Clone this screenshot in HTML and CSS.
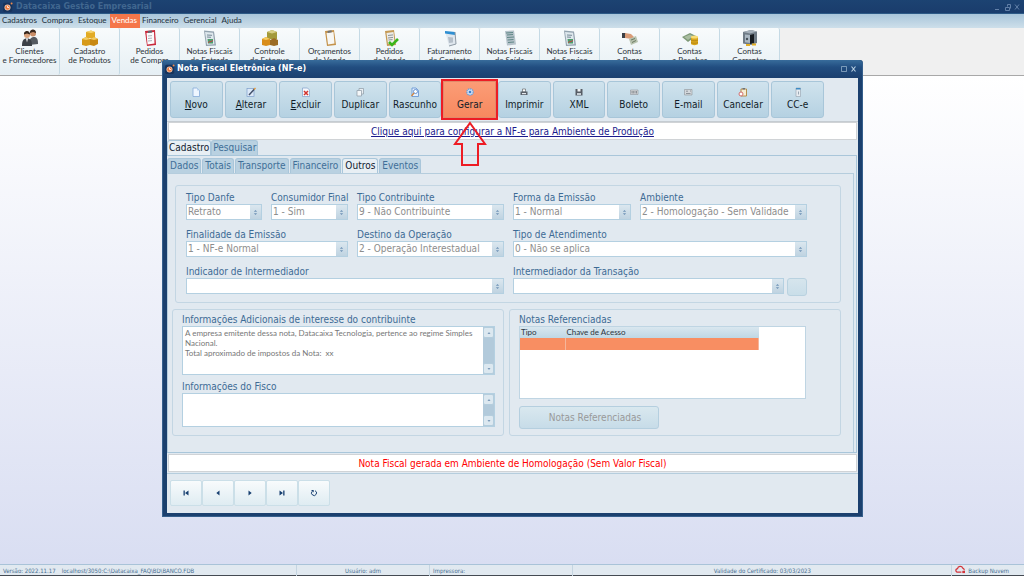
FILE: index.html
```html
<!DOCTYPE html>
<html lang="pt-BR">
<head>
<meta charset="utf-8">
<title>Datacaixa Gestão Empresarial</title>
<link rel="stylesheet" href="styles.css">
</head>
<body>
<svg class="defs" aria-hidden="true">
  <symbol id="logo" viewBox="0 0 12 12"><rect x="0" y="1" width="11" height="11" rx="2" fill="#16335c"/><circle cx="5.4" cy="6.6" r="3.6" fill="#f4c9ae"/><circle cx="5.4" cy="6.6" r="2.7" fill="#e9783f"/><path d="M5.4 4.6v2h2" stroke="#fff" fill="none"/><circle cx="10.3" cy="1.7" r="1.2" fill="#f08a4b"/></symbol>
  <symbol id="people" viewBox="0 0 18 18"><circle cx="12" cy="4.5" r="3" fill="#c98e68"/><path d="M9 4a3 3 0 0 1 6-1v1l-3-1z" fill="#3a2a20"/><path d="M8 16c0-6 2-8 5-8s4 2 4 7z" fill="#555b62"/><circle cx="6" cy="6" r="3" fill="#d9a27c"/><path d="M3 5.500a3 3 0 0 1 6-1v1l-3-1z" fill="#33251c"/><path d="M1 17c0-5 1-7.500 5-7.500s5 2.500 5 7.500z" fill="#3c4147"/><path d="M5 9.500l1 4 1-4z" fill="#fff"/></symbol>
  <symbol id="boxes" viewBox="0 0 18 18"><path d="M5 3l5-1.500 4 1.500v6H5z" fill="#e2ab25"/><path d="M5 3l5-1.500 4 1.500-4 1z" fill="#f6d573"/><path d="M1 10l4-2 4 2v6l-4 1-4-1z" fill="#d79a1a"/><path d="M9 10l4-2 4 2v5l-4 2-4-1z" fill="#c88812"/><path d="M1 10l4-2 4 2-4 1zM9 10l4-2 4 2-4 1z" fill="#f4cd62"/></symbol>
  <symbol id="boxes2" viewBox="0 0 18 18"><path d="M6 3l5-2 5 2v7H6z" fill="#a39a3b"/><path d="M6 3l5-2 5 2-5 1.500z" fill="#d8cf86"/><path d="M1 10l4-2 4 2v6l-4 1-4-1z" fill="#d98d1a"/><path d="M9 11l4-2 4 2v5l-4 1-4-1z" fill="#9b6b24"/><path d="M1 10l4-2 4 2-4 1z" fill="#f4cd62"/></symbol>
  <symbol id="clipred" viewBox="0 0 18 18"><path d="M4 2l10-1 1 15-9 1z" fill="#c9283b"/><path d="M5.500 4l7.500-1 .5 11.500-7 1z" fill="#fbfbfd"/><path d="M7 2l4-.5v2L7 4z" fill="#5f6670"/><path d="M7 7l4-.4M7 9.500l4-.4M7 12l4-.4" stroke="#9aa1ab" stroke-width=".8"/></symbol>
  <symbol id="clip" viewBox="0 0 18 18"><path d="M4 2l9-1 2 15-9 1z" fill="#c4924a"/><path d="M5.500 4l7-1 1 11.500-6.500 1z" fill="#f7f7f4"/><path d="M6.500 2l4-.8.3 2-4 .8z" fill="#6f7378"/></symbol>
  <symbol id="clipok" viewBox="0 0 18 18"><path d="M4 2l9-1 2 15-9 1z" fill="#c49a56"/><path d="M5.500 4l7-1 1 11-6.500 1z" fill="#ecece8"/><path d="M7 6.500l5-.6M7 9l5-.6M7.500 11l4-.4" stroke="#8d9297"/><path d="M8 13l3 3 6-6" fill="none" stroke="#39b51c" stroke-width="2.600"/></symbol>
  <symbol id="report" viewBox="0 0 18 18"><path d="M3 1.500l10 1 2 14-10 .5z" fill="#93a3af"/><path d="M4 3l8 .8 1.500 11.500-7.500.5z" fill="#dfe8ed"/><path d="M6 6l5 .3M6 8l4 .3" stroke="#768996"/><path d="M6.500 10h5.500v4.500H7z" fill="#4f9c6b"/><path d="M7 14l2-2 1 1 2-2" stroke="#b84b4b" fill="none"/></symbol>
  <symbol id="invoice" viewBox="0 0 18 18"><path d="M4 2l9-.5 2 14-9 1z" fill="#b5c2ca"/><path d="M5 4l7-.5M6 6l6-.5M6 8.500l7-.5M6.500 11l6-.5M7 13.500l6-.5" stroke="#5f8886"/></symbol>
  <symbol id="bill" viewBox="0 0 18 18"><path d="M4 2l10 1 1 12-7 2z" fill="#dfe7ee"/><path d="M4 2l10 1v3L4 4.500z" fill="#2e8fd2"/><path d="M7 8l5 .5v5L8 14z" fill="#b5bfc9"/><path d="M14 3l1 12-7 2" stroke="#8e9aa5" fill="none"/></symbol>
  <symbol id="hand" viewBox="0 0 18 18"><path d="M1 4h4v5H1z" fill="#3a3f46"/><path d="M4 4l6 1 3 3-2 2-7-1z" fill="#d99c78"/><path d="M8 10l7-3 2 6-7 3z" fill="#b7c2ae"/><path d="M10 11l4-1.500M11 13.500l4-2" stroke="#6b7b63"/></symbol>
  <symbol id="money" viewBox="0 0 18 18"><path d="M1 8l8-4 6 3-8 6z" fill="#7d9876"/><path d="M3 8l6-2.500 3 1.500-5 4z" fill="#a9bda0"/><path d="M10 8h7v7c-1 1.500-6 1.500-7 0z" fill="#d9a61d"/><ellipse cx="13.500" cy="8" rx="3.500" ry="1.500" fill="#f8dc74"/><path d="M10 11c1 1 6 1 7 0M10 13.500c1 1 6 1 7 0" stroke="#a87a10" fill="none" stroke-width=".7"/></symbol>
  <symbol id="safe" viewBox="0 0 18 18"><path d="M2 3l8-2 6 1.500V14l-6 2-8-1.500z" fill="#6f7b86"/><path d="M2 3l8-2 6 1.500L9 4.500z" fill="#a5b0ba"/><path d="M4 5.500l5 .5v8l-5-.8z" fill="#aab7c2"/><path d="M9 6l4-1v9l-4 1z" fill="#171c22"/><circle cx="6" cy="10" r="1.200" fill="#45505a"/><path d="M5 16h4M11 15.500h4" stroke="#e3ae22" stroke-width="2"/></symbol>

  <symbol id="new" viewBox="0 0 10 10"><path d="M2 1h4l2.500 2.500V9.500H2z" fill="#eef6ff" stroke="#87abd8" stroke-width=".8"/><path d="M6 1v2.500h2.500" fill="#bcd5f2"/></symbol>
  <symbol id="edit" viewBox="0 0 10 10"><rect x="1" y="1.500" width="7" height="8" fill="#dce9f8" stroke="#7e9fcb" stroke-width=".7"/><path d="M3 8l5.500-6" stroke="#43506a" stroke-width="1.500"/><path d="M7.500 2l1.500-1.500 1 1L8.500 3z" fill="#e79b3c"/></symbol>
  <symbol id="del" viewBox="0 0 10 10"><path d="M1.500 1h5l2 2v6.500h-7z" fill="#f5f7fb" stroke="#7e9fcb" stroke-width=".7"/><path d="M3 4l4 4M7 4l-4 4" stroke="#d2322d" stroke-width="1.500"/></symbol>
  <symbol id="dup" viewBox="0 0 10 10"><path d="M4 1.500h4.500V7H4z" fill="#e9eef2" stroke="#8c99a5" stroke-width=".7"/><path d="M2 3.500h4.500V9H2z" fill="#f4f7f9" stroke="#8c99a5" stroke-width=".7"/></symbol>
  <symbol id="draft" viewBox="0 0 10 10"><path d="M2 1h4l2.500 2.500V9.500H2z" fill="#e3effd" stroke="#5e8fd0" stroke-width=".8"/><circle cx="5.500" cy="4.500" r="2" fill="#fff" stroke="#4b7fc6" stroke-width=".8"/><path d="M4 6L1.500 9" stroke="#d68338" stroke-width="1.200"/></symbol>
  <symbol id="gear" viewBox="0 0 10 10"><circle cx="5" cy="5" r="3.200" fill="#cfe0f4" stroke="#6d9bd4" stroke-width="1.200" stroke-dasharray="1.500 .6"/><circle cx="5" cy="5" r="1.300" fill="#3f7ecb"/></symbol>
  <symbol id="print" viewBox="0 0 10 10"><path d="M3.500 2h3v3h-3z" fill="#fff" stroke="#555" stroke-width=".6"/><path d="M1.500 4.500h7V8h-7z" fill="#5b626b"/><path d="M3 6h4v1.200H3z" fill="#e4e8ec"/></symbol>
  <symbol id="disk" viewBox="0 0 10 10"><path d="M1.500 2h7v6.500h-7z" fill="#565c65"/><path d="M3.500 2h3v2.500h-3z" fill="#eff2f4"/><path d="M3 6h4v2H3z" fill="#c8d0d6"/></symbol>
  <symbol id="slip" viewBox="0 0 10 10"><path d="M1.500 3h7.500v4.500H1.500z" fill="#d7d9dc" stroke="#8e9499" stroke-width=".6"/><path d="M3 4v2.500M4.300 4v2.500M6 4v2.500M7.500 4v2.500" stroke="#555c63" stroke-width=".6"/></symbol>
  <symbol id="mail" viewBox="0 0 10 10"><path d="M1.500 2.500h7.500V8H1.500z" fill="#d4d8dc" stroke="#8e9499" stroke-width=".6"/><path d="M3 4.200h2M3 6.500h4.500M7 4h1" stroke="#7c848c" stroke-width=".8"/></symbol>
  <symbol id="cancel" viewBox="0 0 10 10"><path d="M3 2h5.500v7H3z" fill="#f6edd4" stroke="#b0843c" stroke-width=".9"/><path d="M4.500 1h2.500v1.500H4.500z" fill="#6d7278"/><circle cx="3" cy="7" r="2" fill="#fff" stroke="#d26d6d" stroke-width="1"/></symbol>
  <symbol id="card" viewBox="0 0 10 10"><path d="M3 1h4.500v8.500H3z" fill="#e7ecf1" stroke="#93a0ac" stroke-width=".6"/><path d="M3 1h4.500v1.500H3z" fill="#3c8bc4"/><path d="M5.500 4.500v3" stroke="#99a6b2"/></symbol>
  <symbol id="updown" viewBox="0 0 6 8"><path d="M3 1l2 2H1zM3 7L1 5h4z" fill="#6f93b6"/></symbol>
  <symbol id="up" viewBox="0 0 6 6"><path d="M3 2l1.500 2h-3z" fill="#7d9cba"/></symbol>
  <symbol id="down" viewBox="0 0 6 6"><path d="M3 4L1.500 2h3z" fill="#7d9cba"/></symbol>
</svg>

<div class="app">
  <header class="app-title">
    <svg class="logo"><use href="#logo"/></svg>
    <h1>Datacaixa Gestão Empresarial</h1>
    <svg class="win-controls" viewBox="0 0 26 8"><g fill="none" stroke="#6280a8"><path d="M1 6.500h4"/><path d="M11.500 4.500h4v3h-4zM13.500 3.500v-2h3v4"/><path d="M21 1.500l4 5M25 1.500l-4 5"/></g></svg>
  </header>
  <nav class="menu">
    <a href="#">Cadastros</a><a href="#">Compras</a><a href="#">Estoque</a><a href="#" class="active">Vendas</a><a href="#">Financeiro</a><a href="#">Gerencial</a><a href="#">Ajuda</a>
  </nav>
  <div class="ribbon">
    <button><svg><use href="#people"/></svg>Clientes<br>e Fornecedores</button>
    <button><svg><use href="#boxes"/></svg>Cadastro<br>de Produtos</button>
    <button><svg><use href="#clipred"/></svg>Pedidos<br>de Compra</button>
    <button><svg><use href="#report"/></svg>Notas Fiscais<br>de Entrada</button>
    <button><svg><use href="#boxes2"/></svg>Controle<br>de Estoque</button>
    <button><svg><use href="#clip"/></svg>Orçamentos<br>de Venda</button>
    <button><svg><use href="#clipok"/></svg>Pedidos<br>de Venda</button>
    <button><svg><use href="#bill"/></svg>Faturamento<br>de Contrato</button>
    <button><svg><use href="#invoice"/></svg>Notas Fiscais<br>de Saída</button>
    <button><svg><use href="#report"/></svg>Notas Fiscais<br>de Serviço</button>
    <button><svg><use href="#hand"/></svg>Contas<br>a Pagar</button>
    <button><svg><use href="#money"/></svg>Contas<br>a Receber</button>
    <button><svg><use href="#safe"/></svg>Contas<br>Correntes</button>
  </div>
  <main class="desktop"></main>
  <footer class="status">
    <span class="version"><span>Versão: 2022.11.17</span><span>localhost/3050:C:\Datacaixa_FAQ\BD\BANCO.FDB</span></span>
    <span class="user">Usuário: adm</span>
    <span class="printer">Impressora:</span>
    <span class="cert">Validade do Certificado: 03/03/2023</span>
    <span class="backup"><svg viewBox="0 0 12 10"><path d="M7 8H3a2 2 0 0 1-.3-4A3 3 0 0 1 8.500 3.500 2 2 0 0 1 10 6" fill="none" stroke="#d3353c" stroke-width="1.400"/><path d="M8 6.500h3V9H8z" fill="#d3353c"/></svg>Backup Nuvem</span>
  </footer>
</div>

<section class="dialog" role="dialog" aria-labelledby="dlg-title">
  <header class="dialog-title">
    <svg class="logo"><use href="#logo"/></svg>
    <h2 id="dlg-title">Nota Fiscal Eletrônica (NF-e)</h2>
    <svg class="dialog-controls" viewBox="0 0 18 8"><g fill="none" stroke="#b4cde0"><path d="M1.500 1.500h5v5h-5z" opacity=".6"/><path d="M11.500 1.500l4 5M15.500 1.500l-4 5" stroke-width="1.200"/></g></svg>
  </header>
  <div class="dialog-body">
    <div class="toolbar">
      <button><svg><use href="#new"/></svg><span><u>N</u>ovo</span></button>
      <button><svg><use href="#edit"/></svg><span><u>A</u>lterar</span></button>
      <button><svg><use href="#del"/></svg><span><u>E</u>xcluir</span></button>
      <button><svg><use href="#dup"/></svg><span>Duplicar</span></button>
      <button><svg><use href="#draft"/></svg><span>Rascunho</span></button>
      <button class="hot"><svg><use href="#gear"/></svg><span>Gerar</span></button>
      <button><svg><use href="#print"/></svg><span>Imprimir</span></button>
      <button><svg><use href="#disk"/></svg><span>XML</span></button>
      <button><svg><use href="#slip"/></svg><span>Boleto</span></button>
      <button><svg><use href="#mail"/></svg><span>E-mail</span></button>
      <button><svg><use href="#cancel"/></svg><span>Cancelar</span></button>
      <button><svg><use href="#card"/></svg><span>CC-e</span></button>
    </div>
    <p class="notice"><a href="#">Clique aqui para configurar a NF-e para Ambiente de Produção</a></p>
    <div class="tabs main-tabs" role="tablist">
      <button role="tab" aria-selected="true">Cadastro</button><button role="tab">Pesquisar</button>
    </div>
    <div class="page">
      <div class="tabs sub-tabs" role="tablist">
        <button role="tab">Dados</button><button role="tab">Totais</button><button role="tab">Transporte</button><button role="tab">Financeiro</button><button role="tab" aria-selected="true">Outros</button><button role="tab">Eventos</button>
      </div>
      <div class="subpage">
        <div class="group fields">
          <div class="field"><label for="danfe">Tipo Danfe</label><div class="combo"><select id="danfe" disabled><option>Retrato</option></select><span><svg><use href="#updown"/></svg></span></div></div>
          <div class="field"><label for="consumidor">Consumidor Final</label><div class="combo"><select id="consumidor" disabled><option>1 - Sim</option></select><span><svg><use href="#updown"/></svg></span></div></div>
          <div class="field"><label for="contribuinte">Tipo Contribuinte</label><div class="combo"><select id="contribuinte" disabled><option>9 - Não Contribuinte</option></select><span><svg><use href="#updown"/></svg></span></div></div>
          <div class="field"><label for="forma">Forma da Emissão</label><div class="combo"><select id="forma" disabled><option>1 - Normal</option></select><span><svg><use href="#updown"/></svg></span></div></div>
          <div class="field"><label for="ambiente">Ambiente</label><div class="combo"><select id="ambiente" disabled><option>2 - Homologação - Sem Validade</option></select><span><svg><use href="#updown"/></svg></span></div></div>
          <div class="field span2"><label for="finalidade">Finalidade da Emissão</label><div class="combo"><select id="finalidade" disabled><option>1 - NF-e Normal</option></select><span><svg><use href="#updown"/></svg></span></div></div>
          <div class="field"><label for="destino">Destino da Operação</label><div class="combo"><select id="destino" disabled><option>2 - Operação Interestadual</option></select><span><svg><use href="#updown"/></svg></span></div></div>
          <div class="field span2"><label for="atendimento">Tipo de Atendimento</label><div class="combo"><select id="atendimento" disabled><option>0 - Não se aplica</option></select><span><svg><use href="#updown"/></svg></span></div></div>
          <div class="field span3"><label for="indicador">Indicador de Intermediador</label><div class="combo"><select id="indicador" disabled><option></option></select><span><svg><use href="#updown"/></svg></span></div></div>
          <div class="field span2"><label for="intermediador">Intermediador da Transação</label><div class="with-button"><div class="combo"><select id="intermediador" disabled><option></option></select><span><svg><use href="#updown"/></svg></span></div><button aria-label="Buscar intermediador" disabled></button></div></div>
        </div>
        <div class="lower">
          <div class="group notes">
            <label for="info">Informações Adicionais de interesse do contribuinte</label>
            <div class="memo"><textarea id="info" rows="5" disabled>A empresa emitente dessa nota, Datacaixa Tecnologia, pertence ao regime Simples Nacional.
Total aproximado de impostos da Nota:  xx</textarea><div class="scroll"><i><svg><use href="#up"/></svg></i><i><svg><use href="#down"/></svg></i></div></div>
            <label for="fisco">Informações do Fisco</label>
            <div class="memo short"><textarea id="fisco" disabled></textarea><div class="scroll"><i><svg><use href="#up"/></svg></i><i><svg><use href="#down"/></svg></i></div></div>
          </div>
          <div class="group refs">
            <h3>Notas Referenciadas</h3>
            <div class="grid">
              <table><thead><tr><th class="tipo">Tipo</th><th>Chave de Acesso</th></tr></thead><tbody><tr><td></td><td></td></tr></tbody></table>
            </div>
            <button class="ref-button" disabled>Notas Referenciadas</button>
          </div>
        </div>
      </div>
    </div>
    <p class="warning">Nota Fiscal gerada em Ambiente de Homologação (Sem Valor Fiscal)</p>
    <div class="navigator">
      <button aria-label="Primeiro"><svg viewBox="0 0 8 8"><path d="M1.500 1.500h1.300v5H1.500zM6.500 1.500v5L3 4z"/></svg></button>
      <button aria-label="Anterior"><svg viewBox="0 0 8 8"><path d="M5.500 1.500v5L2.300 4z"/></svg></button>
      <button aria-label="Próximo"><svg viewBox="0 0 8 8"><path d="M2.500 1.500v5L5.700 4z"/></svg></button>
      <button aria-label="Último"><svg viewBox="0 0 8 8"><path d="M6.500 1.500H5.200v5h1.300zM1.500 1.500v5L5 4z"/></svg></button>
      <button aria-label="Atualizar"><svg viewBox="0 0 8 8"><path d="M5 1.700A2.500 2.500 0 1 1 2.200 2.300" fill="none" stroke="#173f70"/><path d="M1 1h2.700v2.500z"/></svg></button>
    </div>
  </div>
  <svg class="pointer" viewBox="0 0 36 46"><path d="M18 2L33 23H26V44H10V23H3z" fill="none" stroke="#ed1c24" stroke-width="2"/></svg>
</section>
</body>
</html>
```
FILE: styles.css
```css
* { box-sizing: border-box; }
body, h1, h2, h3, p { margin: 0; }
body, button, select, textarea {
  font-family: "DejaVu Sans Condensed", "DejaVu Sans", "Noto Sans", sans-serif;
  font-size: 10px;
}
h1, h2 { font-family: "DejaVu Sans", sans-serif; font-size: 8px; line-height: 12px; }
button { padding: 0; color: inherit; }
svg { display: block; flex: none; }
.defs { display: none; }

.app { display: flex; flex-direction: column; min-height: 100vh; border-bottom: 1px solid #444a52; }
.logo { width: 10px; height: 10px; }
.app-title {
  display: flex; align-items: center; gap: 3px; height: 14px; padding: 0 4px 0 3px;
  background: linear-gradient(#1c4372, #1a3c6c); border-bottom: 1px solid #2c5986;
}
.app-title h1 { color: #41678f; }
.win-controls { width: 26px; height: 8px; margin-left: auto; }
.menu { display: flex; height: 14px; background: linear-gradient(#a9c5da, #cddfea); }
.menu a { padding: 0 3px 0 2px; font-family: Lato, sans-serif; font-size: 8px; line-height: 13px; color: #22303c; text-decoration: none; }
.menu .active { background: #f5764a; color: #fff; }
.ribbon { display: flex; height: 48px; background: #f0f0f0; border-bottom: 1px solid #a8a8a8; }
.ribbon button {
  width: 60px; height: 47px; padding: 0 0 10px; border: 0; border-right: 1px solid #c5dae5; border-radius: 2px;
  background: linear-gradient(#f8fbfc, #e6eff4); color: #2b3238; font-family: Lato, sans-serif; font-size: 8px; line-height: 9px; white-space: nowrap;
}
.ribbon svg { width: 18px; height: 18px; margin: 0 auto; }
.desktop { flex: 1; background: linear-gradient(#fff, #d9def2); }
.status {
  display: grid; grid-template-columns: 29fr 13fr 14fr 37fr 7fr; height: 11px;
  border-top: 1px solid #a9c3d8; background: #e1e9f0; color: #486f92; font-size: 6px; line-height: 11px; white-space: nowrap;
}
.status > span { padding: 0 3px; border-right: 1px solid #c5d5e1; }
.status > span:last-child { border: 0; }
.version { display: flex; gap: 6px; }
.user, .cert { text-align: center; }
.backup { display: flex; gap: 2px; }
.backup svg { width: 11px; height: 9px; }

.dialog {
  position: absolute; top: 60px; left: 162px; right: 161px;
  padding: 0 4px 3px; background: #1b406e; border: 1px solid #355f8c; border-top: 0; border-radius: 3px 3px 0 0;
}
.dialog-title {
  display: flex; align-items: center; gap: 2px; height: 18px; margin: 0 -4px; padding: 0 4px 0 2px;
  background: linear-gradient(#386c9b, #214d80 40%, #1b406f); color: #fff; border-radius: 3px 3px 0 0;
}
.dialog-controls { width: 18px; height: 8px; margin-left: auto; }
.dialog-body { background: #e1e9f0; }
.toolbar {
  display: grid; grid-template-columns: repeat(12, minmax(0, 1fr)); gap: 2px; padding: 3px 34px 3px 3px;
  height: 44px; border-bottom: 1px solid #c5ccd2;
}
.toolbar button {
  display: flex; flex-direction: column; align-items: center; gap: 1px; padding-top: 5px; height: 37px;
  border: 1px solid #a8c6d9; border-radius: 3px; background: linear-gradient(#d0e3ed, #b5d1e2); color: #111c28; line-height: 14px;
}
.toolbar svg { width: 10px; height: 10px; }
.toolbar u { text-underline-offset: 1px; }
.toolbar .hot { background: linear-gradient(#fb9c76, #f7895f); outline: 2px solid #ed1c24; border-color: #e08a6a; border-radius: 0; }
.notice, .warning { margin: 0 1px; text-align: center; background: #fff; border: 1px solid #d0d3d6; line-height: 18px; height: 18px; }
.notice a { color: #1a1a8c; }
.tabs { display: flex; align-items: flex-end; }
.tabs button {
  height: 15px; padding: 0 2px; border: 1px solid #a9c6da; border-bottom: 0; border-radius: 3px 3px 0 0;
  background: #b9d1e1; color: #3f6f98; line-height: 14px;
}
.tabs [aria-selected] { background: #e8eff4; color: #10202e; }
.main-tabs button { padding: 0 1px; }
.sub-tabs { gap: 1px; }
.page { margin: 0 1px 0 0; padding: 2px 2px 0 0; border-top: 1px solid #a9c6da; border-right: 1px solid #a9c6da; border-bottom: 1px solid #a9c6da; }
.subpage { padding: 11px 12px 16px 4px; border: 1px solid #b5cddd; border-bottom: 0; }
.group { border: 1px solid #c3d6e3; border-radius: 3px; }
.group label, .group h3 { display: block; color: #3d6b95; font-size: 10px; font-weight: normal; line-height: 13px; white-space: nowrap; }
.fields {
  display: grid; grid-template-columns: minmax(0, 76fr) minmax(0, 77fr) minmax(0, 147fr) minmax(0, 118fr) minmax(0, 167fr);
  gap: 8px 9px; margin-left: 3px; padding: 5px 33px 8px 10px;
}
.span2 { grid-column: span 2; }
.span3 { grid-column: span 3; }
.combo { display: flex; flex: 1; min-width: 0; height: 16px; border: 1px solid #b4d0e1; background: #fff; }
.combo select { flex: 1; min-width: 0; padding: 0 1px; border: 0; appearance: none; background: #fff; color: #8d8d8d; opacity: 1; line-height: 14px; }
.combo span { display: flex; align-items: center; justify-content: center; width: 11px; background: linear-gradient(#dbe7ef, #bfd3e1); }
.combo svg { width: 5px; height: 7px; }
.with-button { display: flex; gap: 3px; }
.with-button button { width: 20px; height: 18px; margin-bottom: -2px; border: 1px solid #b9d2e0; border-radius: 3px; background: linear-gradient(#d6e5ed, #c9dee9); }
.lower { display: grid; grid-template-columns: 1fr 1fr; gap: 5px; margin-top: 6px; }
.notes { padding: 3px 8px 8px 9px; }
.memo { display: flex; height: 49px; margin-bottom: 5px; border: 1px solid #b4d0e1; background: #fff; }
.memo.short { height: 34px; margin-bottom: 0; }
.memo textarea { flex: 1; min-width: 0; padding: 1px 2px; border: 0; resize: none; overflow: hidden; background: #fff; color: #777; font-family: Lato, sans-serif; font-size: 8px; line-height: 10px; }
.scroll { display: flex; flex-direction: column; justify-content: space-between; width: 11px; background: #b2cadb; }
.scroll i { display: flex; align-items: center; justify-content: center; height: 11px; border: 1px solid #b4cddd; border-radius: 2px; background: #dce8f0; }
.scroll svg { width: 6px; height: 6px; }
.refs { padding: 3px 34px 5px 9px; }
.grid { height: 73px; border: 1px solid #bfd5e3; background: #fff; }
.grid table { width: 84%; border-collapse: collapse; table-layout: fixed; }
.grid th { height: 11px; padding: 0 1px; background: linear-gradient(#d9e7ef, #bfd7e4); color: #2b3640; font-family: Lato, sans-serif; font-size: 8px; font-weight: normal; line-height: 11px; text-align: left; }
.grid .tipo { width: 19%; }
.grid td { height: 12px; padding: 0; background: #f88e62; border-right: 1px solid #f5b69b; }
.ref-button { width: 140px; height: 23px; margin-top: 7px; padding-left: 12px; border: 1px solid #b5cfdf; border-radius: 3px; background: linear-gradient(#d9e8ef, #c7dce8); color: #999; }
.warning { margin-top: 1px; color: #f00; }
.navigator { display: flex; height: 40px; margin-top: 1px; padding: 6px 3px; border-top: 1px solid #b5cddd; }
.navigator button { display: flex; align-items: center; justify-content: center; width: 32px; height: 26px; border: 1px solid #cbdfe8; border-radius: 2px; background: linear-gradient(#f8fbfc, #dfecf2); }
.navigator svg { width: 8px; height: 8px; fill: #173f70; }
.pointer { position: absolute; top: 61px; left: 289px; width: 36px; height: 46px; }
```
